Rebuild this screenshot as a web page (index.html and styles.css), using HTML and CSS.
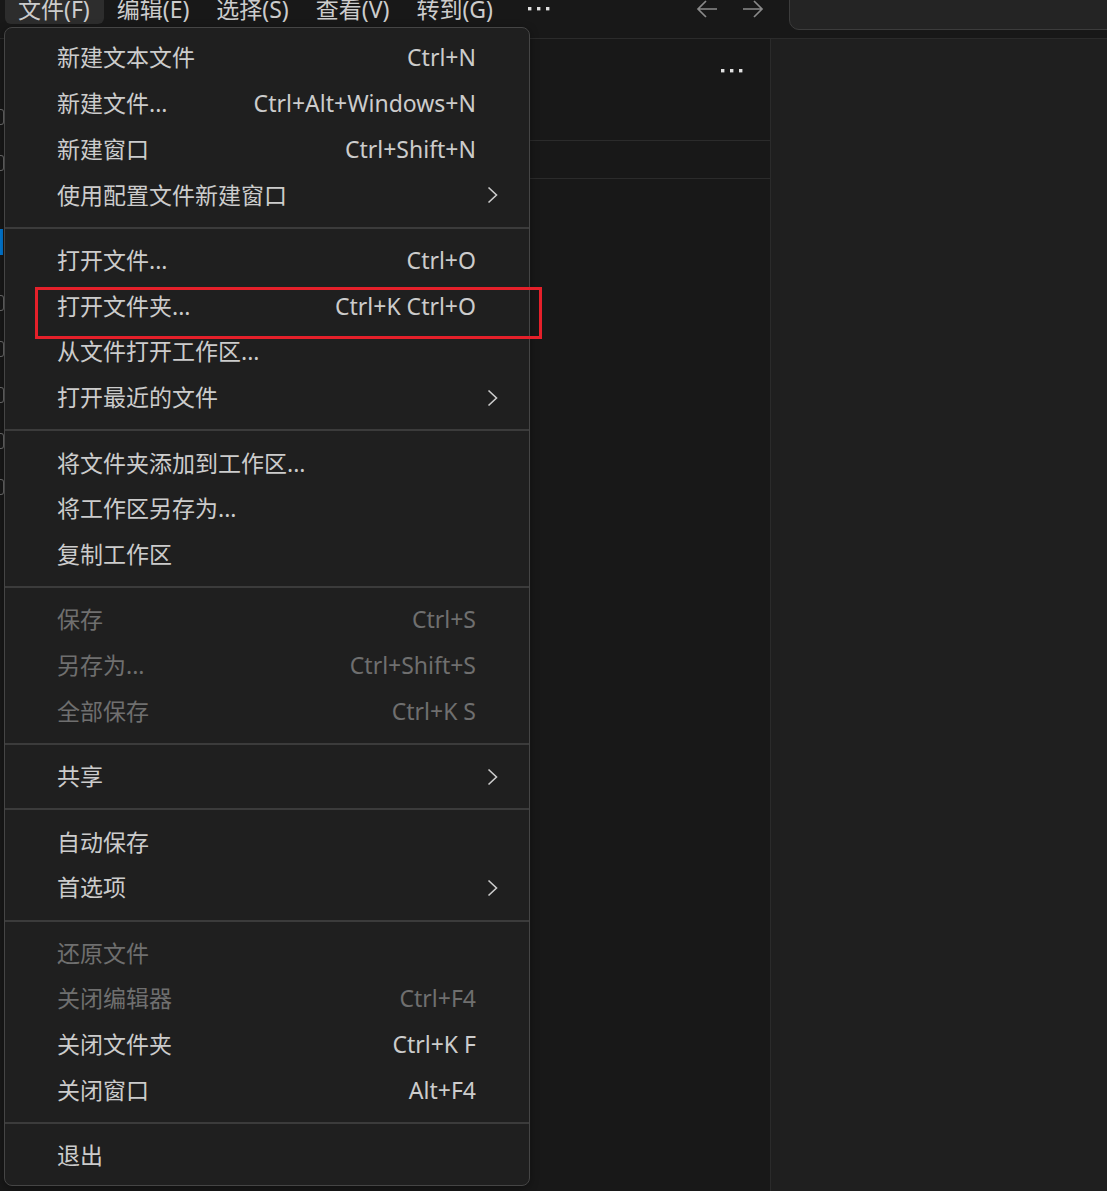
FILE: index.html
```html
<!DOCTYPE html>
<html lang="zh-CN">
<head>
    <meta charset="UTF-8">
    <title>文件菜单</title>
    <link rel="stylesheet" href="styles.css">
</head>
<body>
    <div class="titlebar">
        <div class="menubar">
            <div class="menubar-item active">文件(F)</div>
            <div class="menubar-item">编辑(E)</div>
            <div class="menubar-item">选择(S)</div>
            <div class="menubar-item">查看(V)</div>
            <div class="menubar-item">转到(G)</div>
            <div class="menubar-item more">
                <svg width="24" height="6" viewBox="0 0 24 6"><rect x="1" y="1" width="3.4" height="3.4" fill="#e0e0e0"/><rect x="10" y="1" width="3.4" height="3.4" fill="#e0e0e0"/><rect x="19" y="1" width="3.4" height="3.4" fill="#e0e0e0"/></svg>
            </div>
        </div>
        <div class="nav">
            <svg width="24" height="20" viewBox="0 0 24 20"><path d="M22 10H3M11 2L3 10L11 18" fill="none" stroke="#8a8a8a" stroke-width="1.7"/></svg>
            <svg width="24" height="20" viewBox="0 0 24 20"><path d="M2 10H21M13 2L21 10L13 18" fill="none" stroke="#8a8a8a" stroke-width="1.7"/></svg>
        </div>
        <div class="search"></div>
    </div>

    <div class="workbench">
        <div class="sidebar">
            <div class="activity">
                <span class="act-icon i1"></span>
                <span class="act-icon i2"></span>
                <span class="act-badge"></span>
                <span class="act-icon i3"></span>
                <span class="act-icon i4"></span>
                <span class="act-icon i5"></span>
                <span class="act-icon i6"></span>
                <span class="act-icon i7"></span>
            </div>
            <div class="panel">
                <div class="panel-header">
                    <svg width="24" height="6" viewBox="0 0 24 6"><rect x="1" y="1" width="3.4" height="3.4" fill="#e0e0e0"/><rect x="10" y="1" width="3.4" height="3.4" fill="#e0e0e0"/><rect x="19" y="1" width="3.4" height="3.4" fill="#e0e0e0"/></svg>
                </div>
                <div class="panel-section"></div>
            </div>
        </div>
        <div class="editor"></div>
    </div>

    <div class="menu">
        <div class="item"><span class="label">新建文本文件</span><span class="key">Ctrl+N</span><span class="arrow"></span></div>
        <div class="item"><span class="label">新建文件...</span><span class="key">Ctrl+Alt+Windows+N</span><span class="arrow"></span></div>
        <div class="item"><span class="label">新建窗口</span><span class="key">Ctrl+Shift+N</span><span class="arrow"></span></div>
        <div class="item"><span class="label">使用配置文件新建窗口</span><span class="key"></span><span class="arrow"><svg width="11" height="18" viewBox="0 0 11 18"><path d="M1.5 1.5L9.5 9L1.5 16.5" fill="none" stroke="#cccccc" stroke-width="1.6"/></svg></span></div>
        <div class="sep"></div>
        <div class="item"><span class="label">打开文件...</span><span class="key">Ctrl+O</span><span class="arrow"></span></div>
        <div class="item"><span class="label">打开文件夹...</span><span class="key">Ctrl+K Ctrl+O</span><span class="arrow"></span></div>
        <div class="item"><span class="label">从文件打开工作区...</span><span class="key"></span><span class="arrow"></span></div>
        <div class="item"><span class="label">打开最近的文件</span><span class="key"></span><span class="arrow"><svg width="11" height="18" viewBox="0 0 11 18"><path d="M1.5 1.5L9.5 9L1.5 16.5" fill="none" stroke="#cccccc" stroke-width="1.6"/></svg></span></div>
        <div class="sep"></div>
        <div class="item"><span class="label">将文件夹添加到工作区...</span><span class="key"></span><span class="arrow"></span></div>
        <div class="item"><span class="label">将工作区另存为...</span><span class="key"></span><span class="arrow"></span></div>
        <div class="item"><span class="label">复制工作区</span><span class="key"></span><span class="arrow"></span></div>
        <div class="sep"></div>
        <div class="item disabled"><span class="label">保存</span><span class="key">Ctrl+S</span><span class="arrow"></span></div>
        <div class="item disabled"><span class="label">另存为...</span><span class="key">Ctrl+Shift+S</span><span class="arrow"></span></div>
        <div class="item disabled"><span class="label">全部保存</span><span class="key">Ctrl+K S</span><span class="arrow"></span></div>
        <div class="sep"></div>
        <div class="item"><span class="label">共享</span><span class="key"></span><span class="arrow"><svg width="11" height="18" viewBox="0 0 11 18"><path d="M1.5 1.5L9.5 9L1.5 16.5" fill="none" stroke="#cccccc" stroke-width="1.6"/></svg></span></div>
        <div class="sep"></div>
        <div class="item"><span class="label">自动保存</span><span class="key"></span><span class="arrow"></span></div>
        <div class="item"><span class="label">首选项</span><span class="key"></span><span class="arrow"><svg width="11" height="18" viewBox="0 0 11 18"><path d="M1.5 1.5L9.5 9L1.5 16.5" fill="none" stroke="#cccccc" stroke-width="1.6"/></svg></span></div>
        <div class="sep"></div>
        <div class="item disabled"><span class="label">还原文件</span><span class="key"></span><span class="arrow"></span></div>
        <div class="item disabled"><span class="label">关闭编辑器</span><span class="key">Ctrl+F4</span><span class="arrow"></span></div>
        <div class="item"><span class="label">关闭文件夹</span><span class="key">Ctrl+K F</span><span class="arrow"></span></div>
        <div class="item"><span class="label">关闭窗口</span><span class="key">Alt+F4</span><span class="arrow"></span></div>
        <div class="sep"></div>
        <div class="item"><span class="label">退出</span><span class="key"></span><span class="arrow"></span></div>
    </div>

    <!-- red marker around 打开文件夹 -->
    <div class="highlight-box"></div>
</body>
</html>
```

FILE: styles.css
```css
body {
    margin: 0;
    height: 1191px;
    overflow: hidden;
    background-color: #181818;
    color: #cccccc;
    font-family: "Noto Sans", "Noto Sans CJK SC", sans-serif;
    display: flex;
    flex-direction: column;
}

.titlebar {
    height: 38px;
    flex-shrink: 0;
    border-bottom: 1px solid #2b2b2b;
    display: flex;
    align-items: flex-start;
    overflow: hidden;
}

.menubar {
    display: flex;
    margin-top: -6px;
    padding-left: 5px;
}

.menubar-item {
    height: 30px;
    line-height: 30px;
    padding: 0 14px 0 13px;
    font-size: 23px;
    border-radius: 6px;
    color: #cccccc;
    white-space: nowrap;
}

.menubar-item.active {
    background-color: #2d2d2d;
}

.menubar-item.more {
    display: flex;
    align-items: center;
    padding: 0 8px;
    margin-left: 12px;
}

.nav {
    display: flex;
    gap: 22px;
    margin-left: 136px;
    margin-top: -1px;
}

.search {
    flex: 1;
    height: 38px;
    margin-top: -10px;
    margin-left: 24px;
    margin-right: -20px;
    background-color: #242424;
    border: 1px solid #3c3c3c;
    border-radius: 10px;
}

.workbench {
    flex: 1;
    display: flex;
}

.sidebar {
    width: 770px;
    display: flex;
    border-right: 1px solid #2b2b2b;
    background-color: #181818;
}

.activity {
    width: 4px;
    background-color: #181818;
}

/* bits of the activity bar icons that peek out from under the menu */
.act-icon {
    display: block;
    width: 3px;
    height: 14px;
    margin-top: 30px;
    border-radius: 0 3px 3px 0;
    border: 1px solid #6a6a6a;
    border-left: none;
}

.i1 { margin-top: 70px; }
.i3 { margin-top: 40px; }

.act-badge {
    display: block;
    width: 3px;
    height: 26px;
    margin-top: 58px;
    background-color: #0078d4;
}

.panel {
    flex: 1;
}

.panel-header {
    height: 102px;
    border-bottom: 1px solid #2b2b2b;
    display: flex;
    justify-content: flex-end;
    padding: 29px 26px 0 0;
    box-sizing: border-box;
}

.panel-section {
    height: 37px;
    border-bottom: 1px solid #2b2b2b;
}

.editor {
    flex: 1;
    background-color: #1f1f1f;
}

.menu {
    position: absolute;
    left: 4px;
    top: 27px;
    width: 526px;
    box-sizing: border-box;
    padding: 7px 0 6px;
    background-color: #1f1f1f;
    border: 1px solid #454545;
    border-radius: 8px;
    box-shadow: 0 2px 8px rgba(0, 0, 0, 0.36);
}

.item {
    display: flex;
    align-items: center;
    height: 45.75px;
    padding: 0 31px 0 52px;
    font-size: 23px;
    line-height: 1;
    white-space: nowrap;
}

.item .label {
    flex: 1;
}

.item .arrow {
    width: 22px;
    display: flex;
    justify-content: flex-end;
}

.item.disabled {
    color: #6f6f6f;
}

.sep {
    height: 2px;
    margin: 8.8px 0;
    background-color: #3b3b3b;
}

.highlight-box {
    position: absolute;
    left: 35px;
    top: 287px;
    width: 507px;
    height: 52px;
    box-sizing: border-box;
    border: 3px solid #e5202a;
}
```
